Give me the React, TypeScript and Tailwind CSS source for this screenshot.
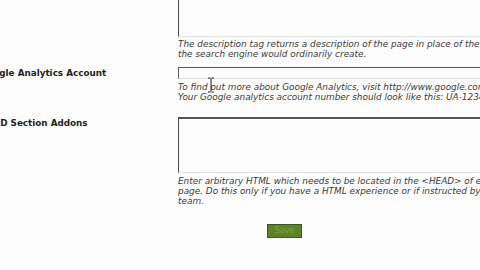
export default function App() {
  const help = "font-['DejaVu_Sans',Verdana,sans-serif] italic text-[8.9px] leading-[10.4px] text-[#3a3a3a] whitespace-nowrap"
  const label = "font-['DejaVu_Sans',Verdana,sans-serif] font-bold text-[8.8px] leading-[10px] text-[#1e1e1e] whitespace-nowrap"

  return (
    <div className="relative w-[480px] h-[270px] overflow-hidden bg-[#fdfdfd]">
      <div className="ml-[-20px] grid grid-cols-[198px_340px]">
        {/* Meta description */}
        <div />
        <div>
          <div className="mt-[-20px] h-[57px] border-l border-t border-l-[#4a4a4a] border-t-[#4a4a4a] border-b border-b-[#e4e4e4]" />
          <div className={`${help} mt-[2px]`}>
            <div>The description tag returns a description of the page in place of the summary</div>
            <div>the search engine would ordinarily create.</div>
          </div>
        </div>

        {/* Google Analytics */}
        <div className={`${label} mt-[8px]`}>Google Analytics Account</div>
        <div className="mt-[7px]">
          <div className="h-[12px] border-t border-l border-t-[#5a5a5a] border-l-[#5a5a5a] border-b border-b-[#dcdcdc]" />
          <div className={`${help} mt-[3px]`}>
            <div>To find out more about Google Analytics, visit http://www.google.com/analytics</div>
            <div>Your Google analytics account number should look like this: UA-1234567-1</div>
          </div>
        </div>

        {/* HEAD addons */}
        <div className={`${label} mt-[15px]`}>HEAD Section Addons</div>
        <div className="mt-[14px]">
          <div className="h-[56px] border-t-2 border-l border-t-[#555] border-l-[#4a4a4a] border-b border-b-[#e0e0e0]" />
          <div className={`${help} mt-[3px]`}>
            <div>Enter arbitrary HTML which needs to be located in the &lt;HEAD&gt; of every</div>
            <div>page. Do this only if you have a HTML experience or if instructed by our support</div>
            <div>team.</div>
          </div>
        </div>
      </div>

      <div className="mt-[8px] ml-[267px]">
        <button className="w-[35px] h-[14px] bg-[#5c8427] border border-[#3b5818] font-['DejaVu_Sans',Verdana,sans-serif] text-[8px] leading-[12px] text-[#7fa33e]">
          Save
        </button>
      </div>

      {/* text cursor */}
      <svg className="absolute left-[207px] top-[77px]" width="8" height="16" viewBox="0 0 8 16">
        <path d="M1 1h2.5M4.5 1H7M4 1.5v13M1 15h2.5M4.5 15H7" stroke="#222" strokeWidth="1" fill="none" />
      </svg>
    </div>
  )
}
